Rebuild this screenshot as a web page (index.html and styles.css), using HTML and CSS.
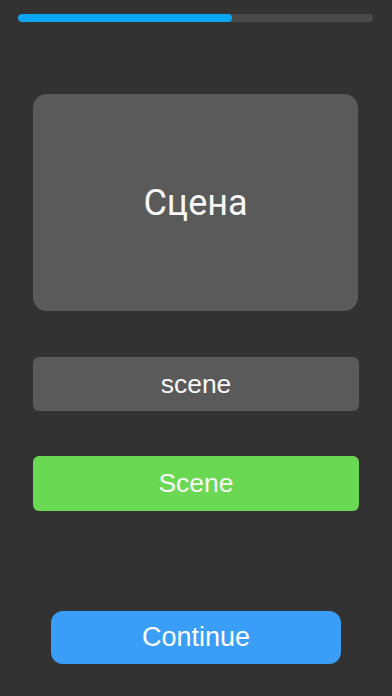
FILE: index.html
```html
<!DOCTYPE html>
<html lang="ru">
<head>
<meta charset="utf-8">
<link rel="stylesheet" href="styles.css">
</head>
<body>
<div class="screen">
  <div class="progress"><div class="progress-fill" style="width:60.3%"></div></div>
  <div class="card"><span class="card-word">Сцена</span></div>
  <div class="answer">scene</div>
  <div class="option">Scene</div>
  <div class="spacer"></div>
  <div class="continue-wrap"><button class="continue">Continue</button></div>
</div>
</body>
</html>
```
FILE: styles.css
```css
html, body {
  margin: 0;
  padding: 0;
  background: #323232;
}
.screen {
  width: 392px;
  height: 696px;
  display: flex;
  flex-direction: column;
  box-sizing: border-box;
  padding-top: 14px;
}
.progress {
  margin: 0 19px 0 18px;
  height: 8px;
  border-radius: 4px;
  background: #4a4a4a;
  overflow: hidden;
}
.progress-fill {
  height: 100%;
  background: #0aa6f3;
  border-radius: 4px;
}
.card {
  margin: 72px 34px 0 33px;
  height: 217px;
  border-radius: 14px;
  background: #5a5a5a;
  display: flex;
  align-items: center;
  justify-content: center;
}
.card-word {
  font-family: Roboto, "Noto Sans", sans-serif;
  font-size: 36px;
  color: #f7f7f7;
}
.answer, .option {
  margin: 0 33px 0 33px;
  border-radius: 6px;
  display: flex;
  align-items: center;
  justify-content: center;
  font-family: "Liberation Sans", Arial, sans-serif;
  font-size: 26.5px;
  color: #f7f7f7;
}
.answer {
  margin-top: 46px;
  height: 54px;
  background: #5a5a5a;
}
.option {
  margin-top: 45px;
  height: 55px;
  background: #6bd854;
}
.spacer {
  height: 100px;
}
.continue-wrap {
  display: flex;
  justify-content: center;
}
.continue {
  width: 290px;
  height: 53px;
  border: none;
  border-radius: 12px;
  background: #3a9ef8;
  color: #ffffff;
  font-family: "Liberation Sans", Arial, sans-serif;
  font-size: 27px;
  padding: 0;
}
```
